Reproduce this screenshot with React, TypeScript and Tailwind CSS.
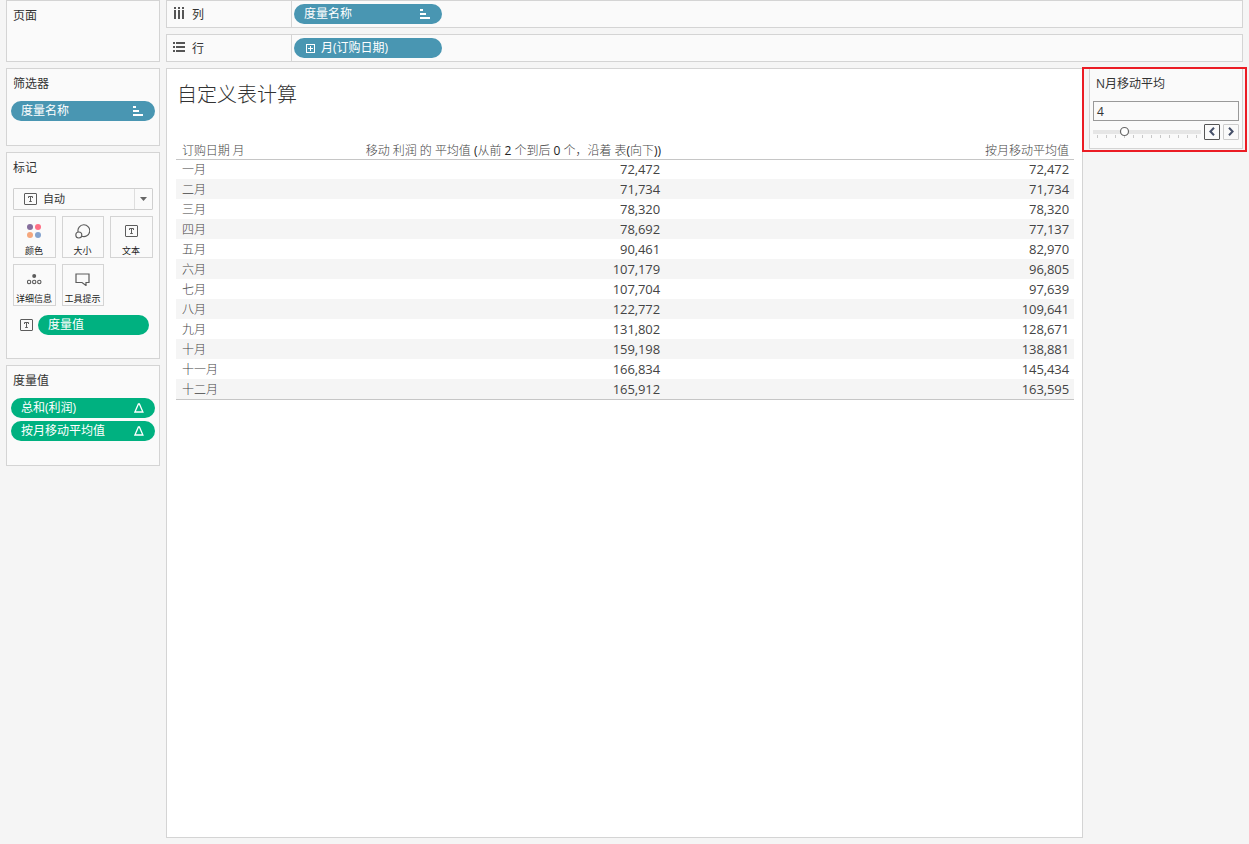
import React from "react";

const months = ["一月", "二月", "三月", "四月", "五月", "六月", "七月", "八月", "九月", "十月", "十一月", "十二月"];
const movingProfit = ["72,472", "71,734", "78,320", "78,692", "90,461", "107,179", "107,704", "122,772", "131,802", "159,198", "166,834", "165,912"];
const movingByMonth = ["72,472", "71,734", "78,320", "77,137", "82,970", "96,805", "97,639", "109,641", "128,671", "138,881", "145,434", "163,595"];

const SortIcon = () => (
  <svg width="10" height="10" viewBox="0 0 10 10" fill="#fff" shapeRendering="crispEdges">
    <rect x="0" y="0" width="3" height="2" />
    <rect x="0" y="4" width="6" height="2" />
    <rect x="0" y="8" width="10" height="2" />
  </svg>
);

const DeltaIcon = () => (
  <svg width="10" height="10" viewBox="0 0 10 10" fill="none" stroke="#fff" strokeWidth="1.3">
    <path d="M0.9 9H8.9L5.4 1H4.4Z" />
  </svg>
);

const TextIcon = () => (
  <svg width="13" height="12" viewBox="0 0 13 12" fill="none" stroke="#5c5c5c" className="shrink-0">
    <rect x="0.5" y="0.5" width="12" height="11" rx="0.5" />
    <path d="M4.5 5V3.5H8.5V5M6.5 3.5V8.5M5.2 8.5H7.8" />
  </svg>
);

function Panel({ title, className, children }: { title: string; className: string; children?: React.ReactNode }) {
  return (
    <section className={"border border-[#d4d4d4] bg-[#fafafa] " + className}>
      <h2 className="px-1.5 pt-1.5 text-xs leading-[18px] text-[#333]">{title}</h2>
      {children}
    </section>
  );
}

function Pill({ text, color, className, lead, icon }: { text: string; color: string; className: string; lead?: React.ReactNode; icon?: React.ReactNode }) {
  return (
    <div className={"flex h-5 items-center rounded-full pl-2.5 text-xs leading-5 text-white " + color + " " + className}>
      {lead}
      <span className="grow pb-px whitespace-nowrap">{text}</span>
      {icon}
    </div>
  );
}

function MarkButton({ label, children }: { label: string; children: React.ReactNode }) {
  return (
    <button className="flex h-[42px] flex-col items-center border border-[#d4d4d4] text-[#222]">
      <span className="flex h-7 items-center justify-center pr-px">{children}</span>
      <span className="-ml-px text-[9px] leading-[12px] whitespace-nowrap">{label}</span>
    </button>
  );
}

function Shelf({ label, icon, children }: { label: string; icon: React.ReactNode; children: React.ReactNode }) {
  return (
    <div className="flex h-7 border border-[#d4d4d4] bg-[#fafafa]">
      <div className="flex w-[125px] items-center gap-[7px] border-r border-[#d4d4d4] pl-1.5 text-xs leading-[18px] text-[#333]">
        {icon}
        <span className="pt-px">{label}</span>
      </div>
      <div className="flex pt-[3px] pl-0.5">{children}</div>
    </div>
  );
}

function Sidebar() {
  return (
    <aside className="flex w-[154px] shrink-0 flex-col gap-1.5">
      <Panel title="页面" className="h-[62px]" />
      <Panel title="筛选器" className="h-[78px]">
        <Pill text="度量名称" color="bg-[#4996b2]" className="mx-1 mt-2 pr-3" icon={<SortIcon />} />
      </Panel>
      <Panel title="标记" className="h-[207px]">
        <div className="mx-1.5 mt-[11px] flex h-[22px] items-center rounded-[1px] border border-[#cfcfcf] pl-2.5 text-[11px] text-[#333]">
          <TextIcon />
          <span className="grow pl-1.5 leading-5">自动</span>
          <span className="flex h-full w-[18px] items-center justify-center border-l border-[#dedede]">
            <svg width="7" height="4" viewBox="0 0 7 4" fill="#666"><path d="M0 0H7L3.5 4Z" /></svg>
          </span>
        </div>
        <div className="mx-1.5 mt-1.5 grid grid-cols-[43px_42px_43px] gap-x-1.5 gap-y-1.5">
          <MarkButton label="颜色">
            <svg width="15" height="15" viewBox="0 0 15 15">
              <circle cx="3" cy="3" r="3" fill="#856e9c" />
              <circle cx="11" cy="3" r="3" fill="#ff6f85" />
              <circle cx="3" cy="11" r="3" fill="#f5a77d" />
              <circle cx="11" cy="11" r="3" fill="#84a3ce" />
            </svg>
          </MarkButton>
          <MarkButton label="大小">
            <svg width="15" height="15" viewBox="0 0 15 15" fill="none" stroke="#5c5c5c" strokeWidth="1.1">
              <path d="M3.1 8A5.9 5.9 0 1 1 6.8 12.2" />
              <circle cx="3.8" cy="11" r="3" />
            </svg>
          </MarkButton>
          <MarkButton label="文本"><TextIcon /></MarkButton>
          <MarkButton label="详细信息">
            <svg width="15" height="12" viewBox="0 0 15 12" fill="none" stroke="#5c5c5c" strokeWidth="1.1">
              <circle cx="7.2" cy="3" r="2" fill="#5c5c5c" stroke="none" />
              <circle cx="2.1" cy="9" r="1.7" />
              <circle cx="7.2" cy="9" r="1.7" />
              <circle cx="12.3" cy="9" r="1.7" />
            </svg>
          </MarkButton>
          <MarkButton label="工具提示">
            <svg width="15" height="13" viewBox="0 0 15 13" fill="none" stroke="#5c5c5c" strokeWidth="1.2">
              <path d="M1 1H14V9.5H11V12.5L7 9.5H1Z" />
            </svg>
          </MarkButton>
        </div>
        <div className="mt-[9px] flex items-center gap-[5px] pl-[13px]">
          <TextIcon />
          <Pill text="度量值" color="bg-[#00b180]" className="w-[111px]" />
        </div>
      </Panel>
      <Panel title="度量值" className="h-[101px]">
        <div className="mx-1 mt-2 flex flex-col gap-[3px]">
          <Pill text="总和(利润)" color="bg-[#00b180]" className="pr-[11px]" icon={<DeltaIcon />} />
          <Pill text="按月移动平均值" color="bg-[#00b180]" className="pr-[11px]" icon={<DeltaIcon />} />
        </div>
      </Panel>
    </aside>
  );
}

function DataTable() {
  return (
    <table className="mt-8 ml-[9px] w-[898px] table-fixed border-separate border-spacing-0 text-[#444]">
      <colgroup>
        <col className="w-[81px]" />
        <col className="w-[408px]" />
        <col className="w-[409px]" />
      </colgroup>
      <thead>
        <tr className="text-xs leading-4 whitespace-nowrap *:h-[19px] *:border-b *:border-[#c6c6c6]">
          <th className="px-0 pt-0.5 pb-0 pl-1.5 text-left font-light tracking-[-0.1px]">订购日期 月</th>
          <th className="px-0 pt-0.5 pr-1 pb-0 text-right font-light tracking-[-0.02px]">
            移动 利润 的 平均值 <span className="font-normal text-[#222]">(</span>从前 <span className="font-normal text-[#222]">2</span> 个到后 <span className="font-normal text-[#222]">0</span> 个，沿着 表<span className="font-normal text-[#222]">(</span>向下<span className="font-normal text-[#222]">))</span>
          </th>
          <th className="px-0 pt-0.5 pr-[5px] pb-0 text-right font-light">按月移动平均值</th>
        </tr>
      </thead>
      <tbody className="*:h-5 *:first:h-[19px] *:last:h-[21px] *:last:*:border-b *:last:*:border-[#c6c6c6]">
        {months.map((month, i) => (
          <tr key={month} className="align-bottom leading-[19px] even:bg-[#f5f5f5]">
            <td className="p-0 pl-1.5 text-xs leading-[19px] font-light">{month}</td>
            <td className="p-0 pr-[5px] text-right text-[13px] leading-[19px] tracking-[-0.1px]">{movingProfit[i]}</td>
            <td className="p-0 pr-[5px] text-right text-[13px] leading-[19px] tracking-[-0.1px]">{movingByMonth[i]}</td>
          </tr>
        ))}
      </tbody>
    </table>
  );
}

function ParameterControl() {
  return (
    <aside className="-mt-px -ml-px h-[85px] w-[165px] shrink-0 border-2 border-[#eb1c24] pl-[5px]">
      <div className="h-[80px] w-[154px] border-x border-b border-[#d4d4d4] bg-[#fafafa] px-[3px] text-[#333]">
        <div className="pt-1.5 pl-[3px] text-xs leading-[18px]">N月移动平均</div>
        <div className="mt-2 h-5 w-[146px] border border-[#999] pl-[3px] text-xs leading-[19px]">4</div>
        <div className="mt-0.5 flex h-[17px] items-center">
          <svg width="108" height="16" viewBox="0 0 108 16" fill="none">
            <rect y="6" width="108" height="4" fill="#e6e6e6" />
            <path d="M4.5 11V14M13.5 11V14M22.5 11V14M31.5 11V14M40.5 11V14M49.5 11V14M58.5 11V14M67.5 11V14M76.5 11V14M85.5 11V14M94.5 11V14M103.5 11V14" stroke="#c8c8c8" />
            <circle cx="31.5" cy="7.5" r="4" fill="#fff" stroke="#666" strokeWidth="1.2" />
          </svg>
          <button className="ml-[3px] flex h-4 w-4 items-center justify-center rounded-[1px] border border-[#555]">
            <svg width="6" height="9" viewBox="0 0 6 9" fill="none" stroke="#465069" strokeWidth="2"><path d="M5 .7L1.4 4.5L5 8.3" /></svg>
          </button>
          <button className="ml-[3px] flex h-4 w-4 items-center justify-center rounded-[1px] border border-[#ccc]">
            <svg width="6" height="9" viewBox="0 0 6 9" fill="none" stroke="#465069" strokeWidth="2"><path d="M1 .7L4.6 4.5L1 8.3" /></svg>
          </button>
        </div>
      </div>
    </aside>
  );
}

export default function App() {
  return (
    <div className="flex h-[844px] w-[1249px] gap-1.5 overflow-hidden bg-[#f5f5f5] pl-1.5 font-['Open_Sans','Noto_Sans_CJK_SC',sans-serif]">
      <Sidebar />
      <main className="flex grow flex-col">
        <div className="mr-1.5 flex flex-col gap-1.5">
          <Shelf
            label="列"
            icon={
              <svg width="12" height="14" viewBox="0 0 12 14" fill="#555" shapeRendering="crispEdges">
                <path d="M1 0h2v2H1zM5 0h2v2H5zM9 0h2v2H9zM1 3h2v9H1zM5 3h2v9H5zM9 3h2v9H9z" />
              </svg>
            }
          >
            <Pill text="度量名称" color="bg-[#4996b2]" className="w-[148px] pr-3" icon={<SortIcon />} />
          </Shelf>
          <Shelf
            label="行"
            icon={
              <svg width="12" height="12" viewBox="0 0 12 12" fill="#555" shapeRendering="crispEdges">
                <path d="M0 0h2v2H0zM0 4h2v2H0zM0 8h2v2H0zM3 0h9v2H3zM3 4h9v2H3zM3 8h9v2H3z" />
              </svg>
            }
          >
            <Pill
              text="月(订购日期)"
              color="bg-[#4996b2]"
              className="w-[148px]"
              lead={
                <svg width="9" height="9" viewBox="0 0 9 9" fill="none" stroke="#fff" className="mr-1.5 ml-0.5 shrink-0">
                  <rect x=".5" y=".5" width="8" height="8" />
                  <path d="M2 4.5H7M4.5 2V7" />
                </svg>
              }
            />
          </Shelf>
        </div>
        <div className="mt-1.5 flex">
          <section className="h-[770px] w-[917px] shrink-0 border border-[#d4d4d4] bg-white">
            <h1 className="pt-[11px] pl-2.5 text-xl leading-[29px] font-light text-[#333]">自定义表计算</h1>
            <DataTable />
          </section>
          <ParameterControl />
        </div>
      </main>
    </div>
  );
}
